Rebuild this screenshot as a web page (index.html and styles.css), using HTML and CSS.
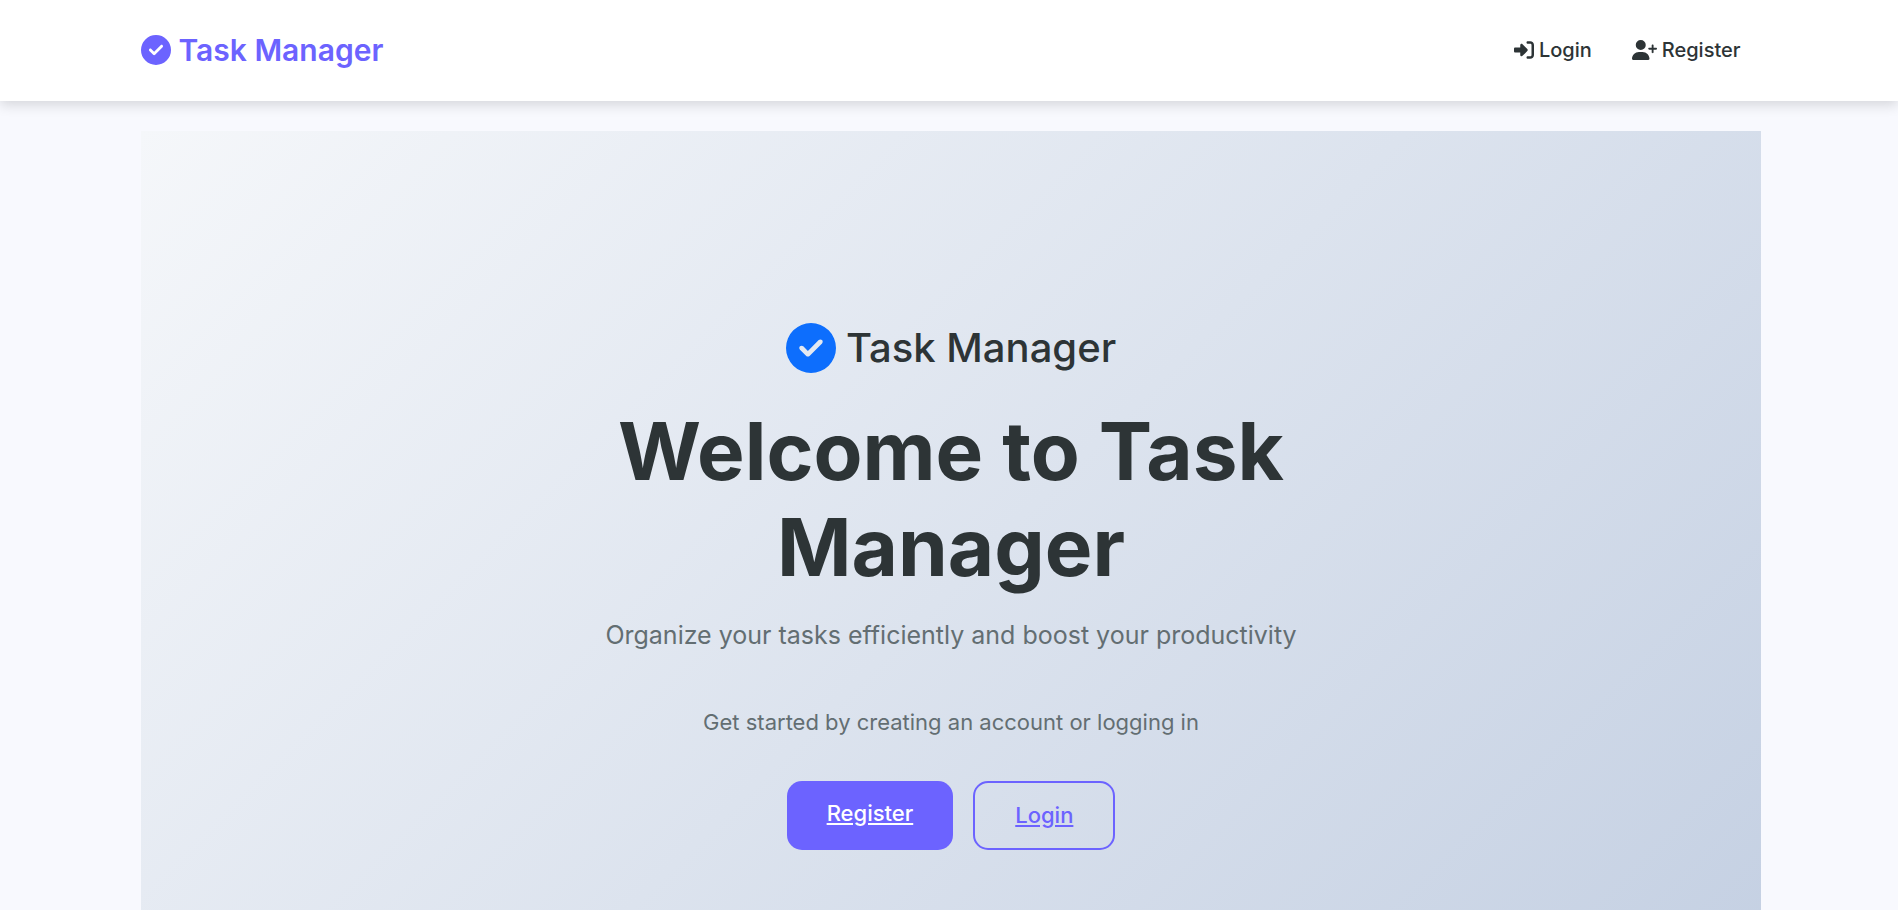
FILE: index.html
```html
<!DOCTYPE html>
<html lang="en">
<head>
<meta charset="utf-8">
<meta name="viewport" content="width=device-width, initial-scale=1">
<title>Task Manager</title>
<link rel="stylesheet" href="styles.css">
</head>
<body>
<header class="navbar">
  <div class="container navbar-inner">
    <a class="brand" href="#">
      <svg class="brand-icon" viewBox="0 0 512 512" aria-hidden="true"><path fill="currentColor" d="M256 512A256 256 0 1 0 256 0a256 256 0 1 0 0 512zM369 209L241 337c-9.400 9.400-24.600 9.400-33.900 0l-64-64c-9.400-9.400-9.400-24.600 0-33.900s24.600-9.400 33.900 0l47 47L335 175c9.400-9.400 24.600-9.400 33.900 0s9.400 24.600 0 33.900z"/></svg>
      <span>Task Manager</span>
    </a>
    <nav class="nav">
      <a class="nav-link" href="#login">
        <svg class="icon-login" viewBox="0 0 512 512" aria-hidden="true"><path fill="currentColor" d="M217.900 105.900L340.700 228.700c7.200 7.200 11.300 17.100 11.300 27.300s-4.100 20.100-11.300 27.300L217.900 406.100c-6.400 6.400-15 9.900-24 9.900c-18.700 0-33.900-15.200-33.900-33.900l0-62.100L32 320c-17.700 0-32-14.300-32-32l0-64c0-17.700 14.300-32 32-32l128 0 0-62.100c0-18.700 15.200-33.900 33.900-33.900c9 0 17.600 3.600 24 9.900zM352 416l64 0c17.700 0 32-14.300 32-32l0-256c0-17.700-14.300-32-32-32l-64 0c-17.700 0-32-14.300-32-32s14.300-32 32-32l64 0c53 0 96 43 96 96l0 256c0 53-43 96-96 96l-64 0c-17.700 0-32-14.300-32-32s14.300-32 32-32z"/></svg>
        <span>Login</span>
      </a>
      <a class="nav-link" href="#register">
        <svg class="icon-register" viewBox="0 0 640 512" aria-hidden="true"><path fill="currentColor" d="M96 128a128 128 0 1 1 256 0A128 128 0 1 1 96 128zM0 482.300C0 383.800 79.800 304 178.300 304l91.400 0C368.200 304 448 383.800 448 482.300c0 16.400-13.300 29.700-29.700 29.700L29.700 512C13.300 512 0 498.700 0 482.300zM504 312l0-64-64 0c-13.300 0-24-10.700-24-24s10.700-24 24-24l64 0 0-64c0-13.300 10.700-24 24-24s24 10.700 24 24l0 64 64 0c13.300 0 24 10.700 24 24s-10.700 24-24 24l-64 0 0 64c0 13.300-10.700 24-24 24s-24-10.700-24-24z"/></svg>
        <span>Register</span>
      </a>
    </nav>
  </div>
</header>
<main class="page">
  <section class="container hero">
    <div class="hero-content">
      <div class="hero-logo">
        <svg class="hero-icon" viewBox="0 0 512 512" aria-hidden="true"><path fill="currentColor" d="M256 512A256 256 0 1 0 256 0a256 256 0 1 0 0 512zM369 209L241 337c-9.400 9.400-24.600 9.400-33.900 0l-64-64c-9.400-9.400-9.400-24.600 0-33.900s24.600-9.400 33.900 0l47 47L335 175c9.400-9.400 24.600-9.400 33.900 0s9.400 24.600 0 33.900z"/></svg>
        <span>Task Manager</span>
      </div>
      <h1 class="hero-title">Welcome to Task Manager</h1>
      <p class="hero-subtitle">Organize your tasks efficiently and boost your productivity</p>
      <p class="hero-text">Get started by creating an account or logging in</p>
      <div class="hero-actions">
        <a class="button button-primary" href="#register">Register</a>
        <a class="button button-outline" href="#login">Login</a>
      </div>
    </div>
  </section>
</main>
</body>
</html>
```
FILE: styles.css
```css
:root {
  --primary: #6c63ff;
  --dark: #2d3436;
  --muted: #636e72;
}

*,
*::before,
*::after {
  box-sizing: border-box;
}

body {
  margin: 0;
  background: #f8f9fe;
  color: var(--dark);
  font-family: Inter, "Liberation Sans", sans-serif;
  font-size: 20px;
  line-height: 30px;
}

a {
  color: inherit;
  text-decoration: none;
}

svg {
  display: block;
  flex: none;
}

.container {
  width: calc(100% - 32px);
  max-width: 1620px;
  margin: 0 auto;
}

.navbar {
  padding: 20px 0 22px 3px;
  background: #fff;
  box-shadow: 0 4px 12px rgba(0, 0, 0, 0.14);
}

.navbar-inner {
  display: flex;
  align-items: center;
  justify-content: space-between;
  min-height: 59px;
}

.brand {
  display: flex;
  align-items: center;
  gap: 8px;
  color: var(--primary);
  font-size: 30px;
  font-weight: 600;
}

.brand-icon {
  width: 30px;
  height: 30px;
}

.nav {
  display: flex;
  gap: 40px;
  padding-right: 20px;
}

.nav-link {
  display: flex;
  align-items: center;
  gap: 5px;
  font-weight: 500;
}

.icon-login {
  width: 20px;
  height: 20px;
}

.icon-register {
  width: 25px;
  height: 20px;
}

.page {
  padding: 30px 0 0 4px;
}

.hero {
  display: flex;
  align-items: center;
  justify-content: center;
  min-height: 100vh;
  padding-bottom: 4px;
  background: linear-gradient(135deg, #f5f7fa 0%, #c3cfe2 100%);
  text-align: center;
}

.hero-content {
  max-width: 750px;
}

.hero-logo {
  display: flex;
  align-items: center;
  justify-content: center;
  gap: 10px;
  margin-bottom: 25px;
  font-size: 40px;
  font-weight: 500;
  line-height: 60px;
}

.hero-icon {
  width: 50px;
  height: 50px;
  color: #0d6efd;
}

.hero-title {
  margin: 0 0 21px;
  font-size: 80px;
  font-weight: 700;
  line-height: 96px;
}

.hero-subtitle {
  margin: 0 0 51px;
  color: var(--muted);
  font-size: 25px;
  line-height: 38px;
}

.hero-text {
  margin: 0 0 42px;
  color: var(--muted);
  font-size: 22px;
  line-height: 34px;
}

.hero-actions {
  display: flex;
  justify-content: center;
  gap: 20px;
}

.button {
  padding: 16px 40px;
  border-radius: 15px;
  font-size: 22px;
  font-weight: 500;
  line-height: 33px;
  text-decoration: underline;
}

.button-primary {
  background: var(--primary);
  color: #fff;
}

.button-outline {
  border: 2px solid var(--primary);
  color: var(--primary);
}
```
